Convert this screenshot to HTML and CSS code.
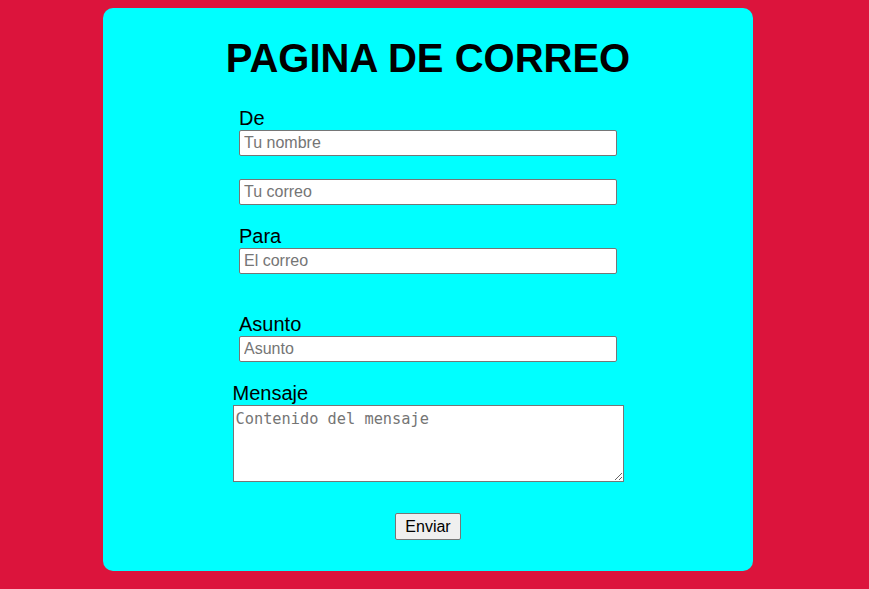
FILE: index.html
```html
<!DOCTYPE html>
<html lang="es">
<head>
<meta charset="utf-8">
<title>Pagina de correo</title>
<link rel="stylesheet" href="styles.css">
</head>
<body>
<div class="card">
  <h1 class="title">PAGINA DE CORREO</h1>
  <form class="form">
    <div class="field">
      <label class="label" for="nombre">De</label>
      <input class="input" id="nombre" type="text" placeholder="Tu nombre">
      <input class="input input-gap" type="email" placeholder="Tu correo">
    </div>
    <div class="field field-para">
      <label class="label" for="para">Para</label>
      <input class="input" id="para" type="email" placeholder="El correo">
    </div>
    <div class="field field-asunto">
      <label class="label" for="asunto">Asunto</label>
      <input class="input" id="asunto" type="text" placeholder="Asunto">
    </div>
    <div class="field field-msg">
      <label class="label" for="msg">Mensaje</label>
      <textarea class="textarea" id="msg" placeholder="Contenido del mensaje"></textarea>
    </div>
    <button class="button" type="button">Enviar</button>
  </form>
</div>
</body>
</html>
```
FILE: styles.css
```css
html, body {
  margin: 0;
  padding: 0;
}
body {
  background: #dc143c;
  padding-top: 8px;
  font-family: "Liberation Sans", Arial, sans-serif;
  height: 589px;
  box-sizing: border-box;
}
.card {
  width: 650px;
  height: 563px;
  box-sizing: border-box;
  margin-left: 103px;
  background: #00ffff;
  border-radius: 10px;
  padding-top: 27px;
  display: flex;
  flex-direction: column;
  align-items: center;
}
.title {
  margin: 0 0 26px 0;
  font-size: 40px;
  line-height: 46px;
  font-weight: bold;
  color: #000;
}
.form {
  display: flex;
  flex-direction: column;
  align-items: center;
  margin: 0;
}
.field {
  width: 378px;
  display: flex;
  flex-direction: column;
}
.field-para { margin-top: 20px; }
.field-asunto { margin-top: 39px; }
.field-msg { margin-top: 20px; width: 391px; }
.label {
  font-size: 20px;
  line-height: 23px;
  height: 23px;
  color: #000;
}
.input {
  box-sizing: border-box;
  width: 378px;
  height: 26px;
  margin: 0;
  padding: 0 4px;
  border: 1px solid #767676;
  border-radius: 2px;
  background: #fff;
  font-family: "Liberation Sans", Arial, sans-serif;
  font-size: 16px;
  color: #000;
}
.input::placeholder { color: #757575; }
.input-gap { margin-top: 23px; }
.textarea {
  box-sizing: border-box;
  width: 391px;
  height: 77px;
  margin: 0;
  padding: 4px 2px 2px 2px;
  border: 1px solid #767676;
  border-radius: 0;
  background: #fff;
  font-family: "DejaVu Sans Mono", "Liberation Mono", monospace;
  font-size: 15.3px;
  resize: both;
}
.textarea::placeholder { color: #757575; }
.button {
  margin-top: 31px;
  width: 66px;
  height: 27px;
  box-sizing: border-box;
  padding: 0;
  border: 1px solid #767676;
  border-radius: 2px;
  background: #efefef;
  font-family: "Liberation Sans", Arial, sans-serif;
  font-size: 16px;
  color: #000;
}
```
